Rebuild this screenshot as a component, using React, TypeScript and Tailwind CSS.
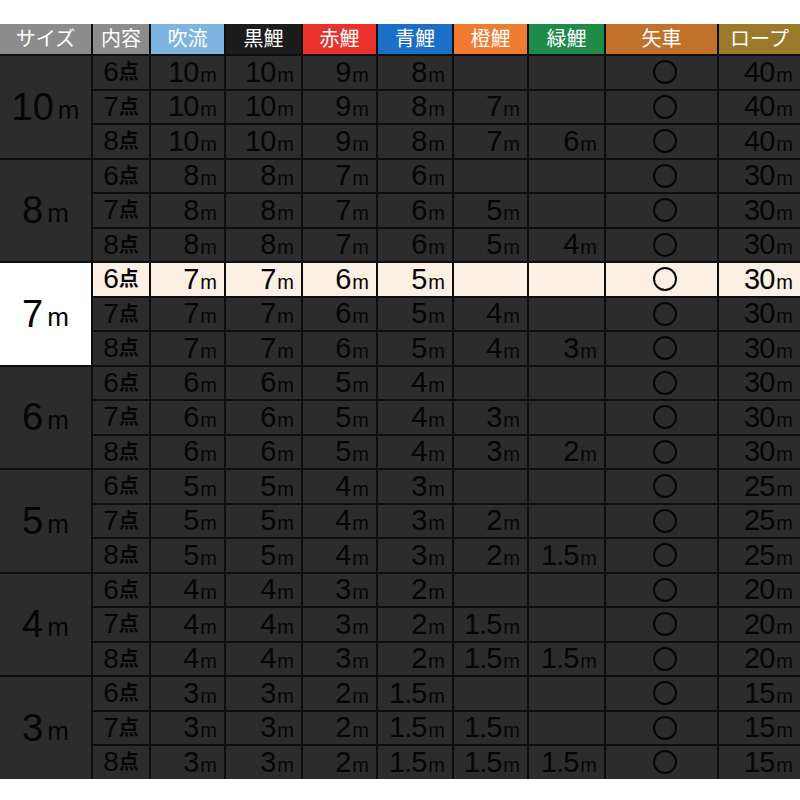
const font = { fontFamily: '"Liberation Sans", "Noto Sans CJK JP", sans-serif' };

const headers = [
  { t: "サイズ", c: "bg-[#8c8c8c]" },
  { t: "内容", c: "bg-[#8c8c8c]" },
  { t: "吹流", c: "bg-[#7db5e1]" },
  { t: "黒鯉", c: "bg-[#1c1c1c]" },
  { t: "赤鯉", c: "bg-[#e8322b]" },
  { t: "青鯉", c: "bg-[#1c6fc6]" },
  { t: "橙鯉", c: "bg-[#ef7b30]" },
  { t: "緑鯉", c: "bg-[#1f8b4b]" },
  { t: "矢車", c: "bg-[#c2712b]" },
  { t: "ロープ", c: "bg-[#9b7a2c]" },
];

type Group = { size: string; f: string; red: string; blue: string; orange: string; green: string; rope: string };
const groups: Group[] = [
  { size: "10", f: "10", red: "9", blue: "8", orange: "7", green: "6", rope: "40" },
  { size: "8", f: "8", red: "7", blue: "6", orange: "5", green: "4", rope: "30" },
  { size: "7", f: "7", red: "6", blue: "5", orange: "4", green: "3", rope: "30" },
  { size: "6", f: "6", red: "5", blue: "4", orange: "3", green: "2", rope: "30" },
  { size: "5", f: "5", red: "4", blue: "3", orange: "2", green: "1.5", rope: "25" },
  { size: "4", f: "4", red: "3", blue: "2", orange: "1.5", green: "1.5", rope: "20" },
  { size: "3", f: "3", red: "2", blue: "1.5", orange: "1.5", green: "1.5", rope: "15" },
];

function M({ v }: { v: string }) {
  if (!v) return null;
  return (
    <span className="tracking-[-1px]">
      <span className="text-[29px]">{v}</span>
      <span className="text-[20px] ml-[2px]">m</span>
    </span>
  );
}

export default function App() {
  return (
    <div className="w-[800px] h-[800px] bg-white pt-[24px]" style={font}>
      <div className="grid grid-cols-[91px_56px_73px_75px_73px_74px_73px_75px_111px_81px] grid-rows-[30px] auto-rows-[32.5px] gap-[2px] bg-[#0e0e0e] text-[#050505]">
        {headers.map((h) => (
          <div key={h.t} className={`${h.c} flex items-center justify-center text-white text-[20px] leading-none`}>
            {h.t}
          </div>
        ))}
        {groups.map((g) => {
          const hl = g.size === "7";
          return [6, 7, 8].map((n) => {
            const lit = hl && n === 6;
            const bg = lit ? "bg-[#fcefe4]" : "bg-[#2c2c2c]";
            const cell = `${bg} flex items-center justify-end pr-[8px] leading-none`;
            return (
              <>
                {n === 6 && (
                  <div className={`row-span-3 ${hl ? "bg-white" : "bg-[#2c2c2c]"} flex items-center justify-center leading-none`}>
                    <span className="text-[38px]">{g.size}</span>
                    <span className="text-[26px] ml-[4px] mt-[6px]">m</span>
                  </div>
                )}
                <div className={`${bg} flex items-center justify-center leading-none`}>
                  <span className="text-[28px]">{n}</span>
                  <span className="text-[20px] font-bold">点</span>
                </div>
                <div className={cell}><M v={g.f} /></div>
                <div className={cell}><M v={g.f} /></div>
                <div className={cell}><M v={g.red} /></div>
                <div className={cell}><M v={g.blue} /></div>
                <div className={cell}><M v={n >= 7 ? g.orange : ""} /></div>
                <div className={cell}><M v={n === 8 ? g.green : ""} /></div>
                <div className={`${bg} flex items-center justify-center pl-[6px]`}>
                  <div className="w-[24px] h-[24px] rounded-full border-2 border-[#050505]" />
                </div>
                <div className={cell}><M v={g.rope} /></div>
              </>
            );
          });
        })}
      </div>
    </div>
  );
}
